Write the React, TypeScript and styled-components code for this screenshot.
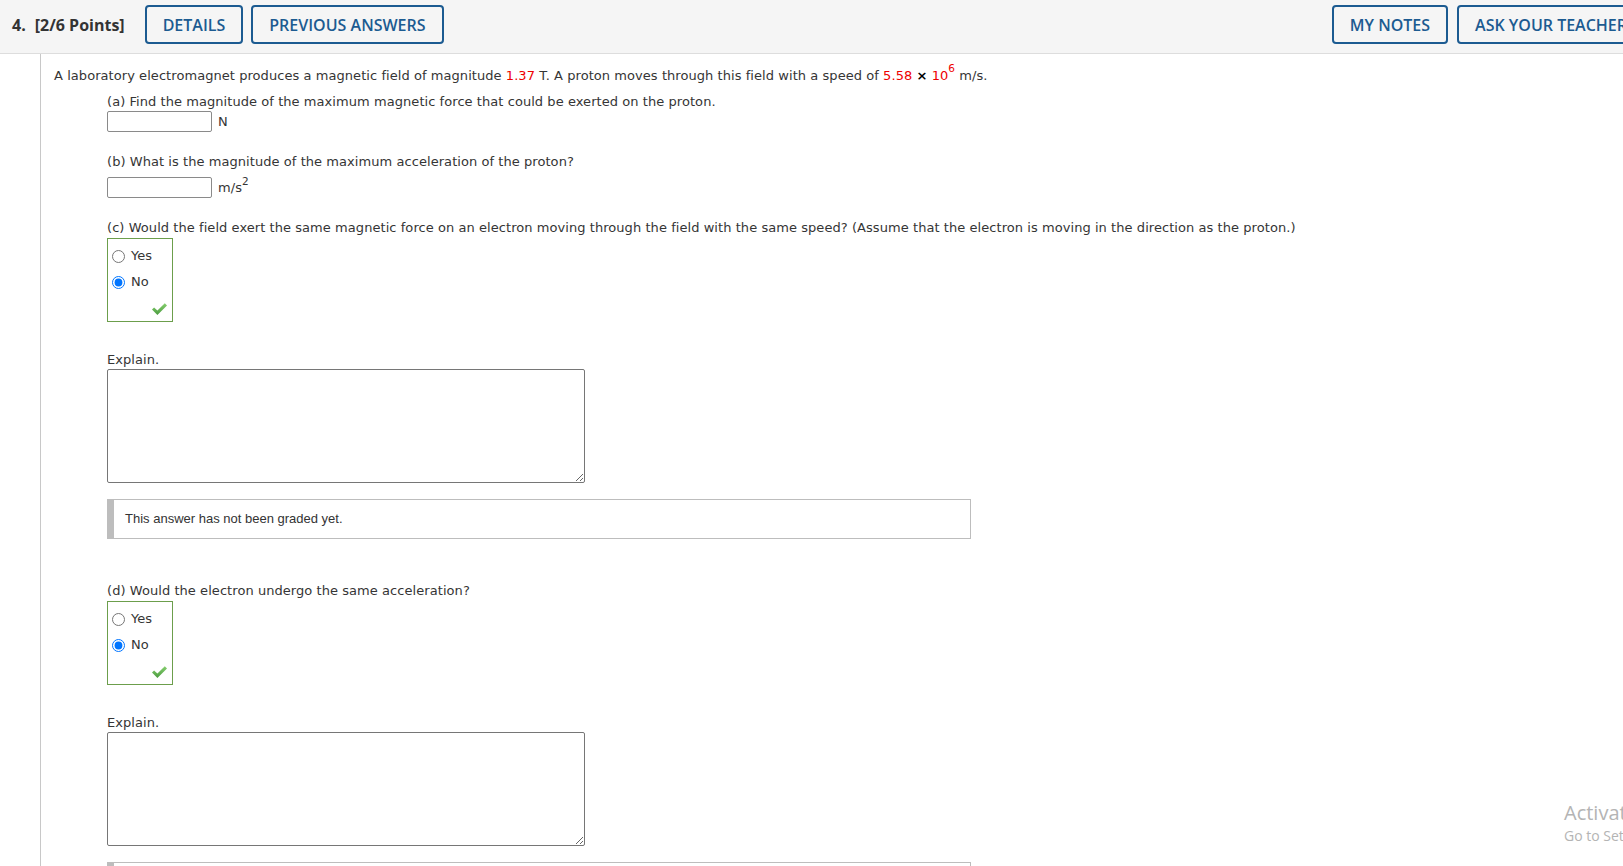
import React from "react";
import styled, { createGlobalStyle } from "styled-components";

const GlobalStyle = createGlobalStyle`
  html, body {
    margin: 0;
    padding: 0;
    overflow: hidden;
    background: #ffffff;
  }
  body {
    font-family: "DejaVu Sans", Verdana, sans-serif;
  }
`;

const Page = styled.div`
  position: relative;
  width: 1623px;
  height: 866px;
  overflow: hidden;
  background: #ffffff;
`;

const Header = styled.header`
  display: flex;
  align-items: flex-start;
  box-sizing: border-box;
  width: 1653px;
  height: 54px;
  padding: 5px 8px 0 12px;
  background: #f5f5f5;
  border-bottom: 1px solid #dddddd;
  font-family: "Open Sans", "Liberation Sans", sans-serif;
`;

const Title = styled.div`
  display: flex;
  align-items: center;
  height: 39px;
  margin-right: 20px;
  font-size: 16px;
  font-weight: 700;
  color: #333333;
  gap: 9px;
`;

const ButtonGroup = styled.div<{ $right?: boolean }>`
  display: flex;
  gap: ${(p) => (p.$right ? "9px" : "8px")};
  margin-left: ${(p) => (p.$right ? "auto" : "0")};
`;

const HeaderButton = styled.button`
  box-sizing: border-box;
  height: 39px;
  padding: 0 16px;
  border: 2px solid #1c5b91;
  border-radius: 4px;
  background: transparent;
  color: #1c5b91;
  font-family: "Open Sans", "Liberation Sans", sans-serif;
  font-size: 16px;
  font-weight: 600;
  white-space: nowrap;
  cursor: pointer;
`;

const Body = styled.main`
  box-sizing: border-box;
  margin-left: 40px;
  min-height: 812px;
  padding: 13px 0 0 13px;
  border-left: 1px solid #c8c8c8;
  color: #353535;
  font-size: 13px;
  line-height: 16px;
  letter-spacing: 0.06px;
`;

const Prompt = styled.p`
  margin: 0;
  padding-top: 1px;
  white-space: nowrap;
`;

const Red = styled.span`
  color: #ee0000;
`;

const Times = styled.span`
  color: #000000;
  font-weight: 700;
`;

const Sup = styled.span<{ $raise: number }>`
  font-size: 10.5px;
  line-height: 0;
  vertical-align: ${(p) => p.$raise}px;
`;

const Part = styled.section<{ $top: number }>`
  margin: ${(p) => p.$top}px 0 0 53px;
`;

const PartLabel = styled.div`
  white-space: nowrap;
`;

const AnswerRow = styled.div<{ $top: number }>`
  display: flex;
  align-items: center;
  gap: 6px;
  margin-top: ${(p) => p.$top}px;
`;

const NumberInput = styled.input`
  box-sizing: border-box;
  width: 105px;
  height: 21px;
  margin: 0;
  padding: 1px 3px;
  border: 1px solid #8a8a8a;
  border-radius: 2px;
  background: #ffffff;
`;

const Unit = styled.span`
  color: #353535;
`;

const ChoiceBox = styled.div`
  box-sizing: border-box;
  width: 66px;
  height: 84px;
  margin-top: 2px;
  padding: 4px 0 7px 4px;
  border: 1px solid #6c9e4c;
`;

const ChoiceRow = styled.label`
  display: flex;
  align-items: center;
  gap: 6px;
  height: 26px;
`;

const Radio = styled.input`
  width: 13px;
  height: 13px;
  margin: 0;
`;

const CheckRow = styled.div`
  display: flex;
  justify-content: flex-end;
  margin-top: 8px;
  padding-right: 5px;
  height: 12px;
`;

const ExplainLabel = styled.div`
  margin-top: 30px;
`;

const ExplainArea = styled.textarea`
  display: block;
  box-sizing: border-box;
  width: 478px;
  height: 114px;
  margin: 1px 0 0 0;
  border: 1px solid #767676;
  border-radius: 2px;
  background: #ffffff;
`;

const GradedBox = styled.div`
  box-sizing: border-box;
  display: flex;
  align-items: center;
  width: 864px;
  height: 40px;
  margin-top: 16px;
  padding-left: 11px;
  border: 1px solid #bdbdbd;
  border-left: 7px solid #bdbdbd;
  font-family: "Liberation Sans", Arial, sans-serif;
  font-size: 13px;
  letter-spacing: 0;
  color: #333333;
`;

const Watermark = styled.div`
  position: absolute;
  left: 1564px;
  top: 803px;
  font-family: "Open Sans", "Liberation Sans", sans-serif;
  color: #b4b4b4;
  white-space: nowrap;
  pointer-events: none;
`;

const WatermarkTitle = styled.div`
  font-size: 20px;
  line-height: 20px;
`;

const WatermarkSub = styled.div`
  margin-top: 3px;
  font-size: 14px;
  line-height: 20px;
`;

const CheckMark: React.FC<{ id: string }> = ({ id }) => (
  <svg width="15" height="12" viewBox="0 0 15 12">
    <defs>
      <linearGradient id={id} x1="0" y1="0" x2="0" y2="1">
        <stop offset="0" stopColor="#86cf6f" />
        <stop offset="1" stopColor="#4b9b3f" />
      </linearGradient>
    </defs>
    <path d="M0 6.6 L2.1 4.5 L5.4 7.6 L12.8 0.3 L15 2.4 L5.4 12 Z" fill={`url(#${id})`} />
  </svg>
);

const YesNo: React.FC<{ name: string }> = ({ name }) => (
  <ChoiceBox>
    <ChoiceRow>
      <Radio type="radio" name={name} value="yes" />
      <span>Yes</span>
    </ChoiceRow>
    <ChoiceRow>
      <Radio type="radio" name={name} value="no" defaultChecked />
      <span>No</span>
    </ChoiceRow>
    <CheckRow>
      <CheckMark id={`grad-${name}`} />
    </CheckRow>
  </ChoiceBox>
);

export default function App() {
  return (
    <Page>
      <GlobalStyle />
      <Header>
        <Title>
          <span>4.</span>
          <span>[2/6 Points]</span>
        </Title>
        <ButtonGroup>
          <HeaderButton>DETAILS</HeaderButton>
          <HeaderButton>PREVIOUS ANSWERS</HeaderButton>
        </ButtonGroup>
        <ButtonGroup $right>
          <HeaderButton>MY NOTES</HeaderButton>
          <HeaderButton>ASK YOUR TEACHER</HeaderButton>
        </ButtonGroup>
      </Header>
      <Body>
        <Prompt>
          A laboratory electromagnet produces a magnetic field of magnitude <Red>1.37</Red> T. A proton
          moves through this field with a speed of <Red>5.58</Red> <Times>×</Times>{" "}
          <Red>
            10<Sup $raise={8}>6</Sup>
          </Red>{" "}
          m/s.
        </Prompt>

        <Part $top={10}>
          <PartLabel>(a) Find the magnitude of the maximum magnetic force that could be exerted on the proton.</PartLabel>
          <AnswerRow $top={1}>
            <NumberInput type="text" />
            <Unit>N</Unit>
          </AnswerRow>
        </Part>

        <Part $top={22}>
          <PartLabel>(b) What is the magnitude of the maximum acceleration of the proton?</PartLabel>
          <AnswerRow $top={7}>
            <NumberInput type="text" />
            <Unit>
              m/s<Sup $raise={7}>2</Sup>
            </Unit>
          </AnswerRow>
        </Part>

        <Part $top={22}>
          <PartLabel>
            (c) Would the field exert the same magnetic force on an electron moving through the field with the
            same speed? (Assume that the electron is moving in the direction as the proton.)
          </PartLabel>
          <YesNo name="partc" />
          <ExplainLabel>Explain.</ExplainLabel>
          <ExplainArea />
          <GradedBox>This answer has not been graded yet.</GradedBox>
        </Part>

        <Part $top={44}>
          <PartLabel>(d) Would the electron undergo the same acceleration?</PartLabel>
          <YesNo name="partd" />
          <ExplainLabel>Explain.</ExplainLabel>
          <ExplainArea />
          <GradedBox>This answer has not been graded yet.</GradedBox>
        </Part>
      </Body>
      <Watermark>
        <WatermarkTitle>Activate Windows</WatermarkTitle>
        <WatermarkSub>Go to Settings to activate Windows.</WatermarkSub>
      </Watermark>
    </Page>
  );
}
